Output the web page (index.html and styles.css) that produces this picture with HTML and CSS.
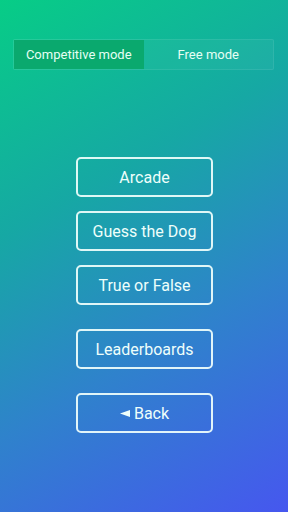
FILE: index.html
```html
<!DOCTYPE html>
<html lang="en">
<head>
    <meta charset="UTF-8">
    <meta name="viewport" content="width=device-width, initial-scale=1.0">
    <title>Dog Quiz Menu</title>
    <link rel="stylesheet" href="styles.css">
</head>
<body>
    <div class="screen">
        <div class="mode-switch">
            <div class="mode-tab active">Competitive mode</div>
            <div class="mode-tab">Free mode</div>
        </div>
        <div class="menu">
            <div class="menu-group">
                <button class="menu-button">Arcade</button>
                <button class="menu-button">Guess the Dog</button>
                <button class="menu-button">True or False</button>
            </div>
            <button class="menu-button spaced">Leaderboards</button>
            <button class="menu-button spaced">
                <svg class="back-icon" viewBox="0 0 10 7"><polygon points="0,3.5 10,0 10,7" fill="currentColor"></polygon></svg>
                Back
            </button>
        </div>
    </div>
</body>
</html>
```

FILE: styles.css
```css
* {
    margin: 0;
    padding: 0;
    box-sizing: border-box;
}

body {
    font-family: Roboto, "Noto Sans", sans-serif;
    width: 288px;
    height: 512px;
    overflow: hidden;
}

.screen {
    height: 512px;
    background: linear-gradient(150deg, #07cd86 0%, #16a8a4 35%, #2f82cc 65%, #4657ef 100%);
    display: flex;
    flex-direction: column;
    padding: 39px 14px 0 13px;
}

.mode-switch {
    display: flex;
    height: 31px;
    border: 1px solid rgba(255, 255, 255, 0.08);
    background-color: rgba(255, 255, 255, 0.04);
    border-radius: 2px;
}

.mode-tab {
    flex: 1;
    display: flex;
    align-items: center;
    justify-content: center;
    font-size: 13px;
    color: #e6fff4;
}

.mode-tab.active {
    background-color: #0aa96e;
}

.menu {
    display: flex;
    flex-direction: column;
    align-items: center;
    margin-top: 87px;
    padding-left: 2px;
}

.menu-group {
    display: flex;
    flex-direction: column;
    gap: 14px;
}

.menu-button {
    width: 137px;
    height: 40px;
    background: transparent;
    border: 2px solid rgba(240, 255, 252, 0.92);
    border-radius: 5px;
    color: #eefffb;
    font-family: Roboto, "Noto Sans", sans-serif;
    font-size: 16px;
    display: flex;
    align-items: center;
    justify-content: center;
    gap: 4px;
}

.menu-button.spaced {
    margin-top: 24px;
}

.back-icon {
    width: 10px;
    height: 7px;
}
```
